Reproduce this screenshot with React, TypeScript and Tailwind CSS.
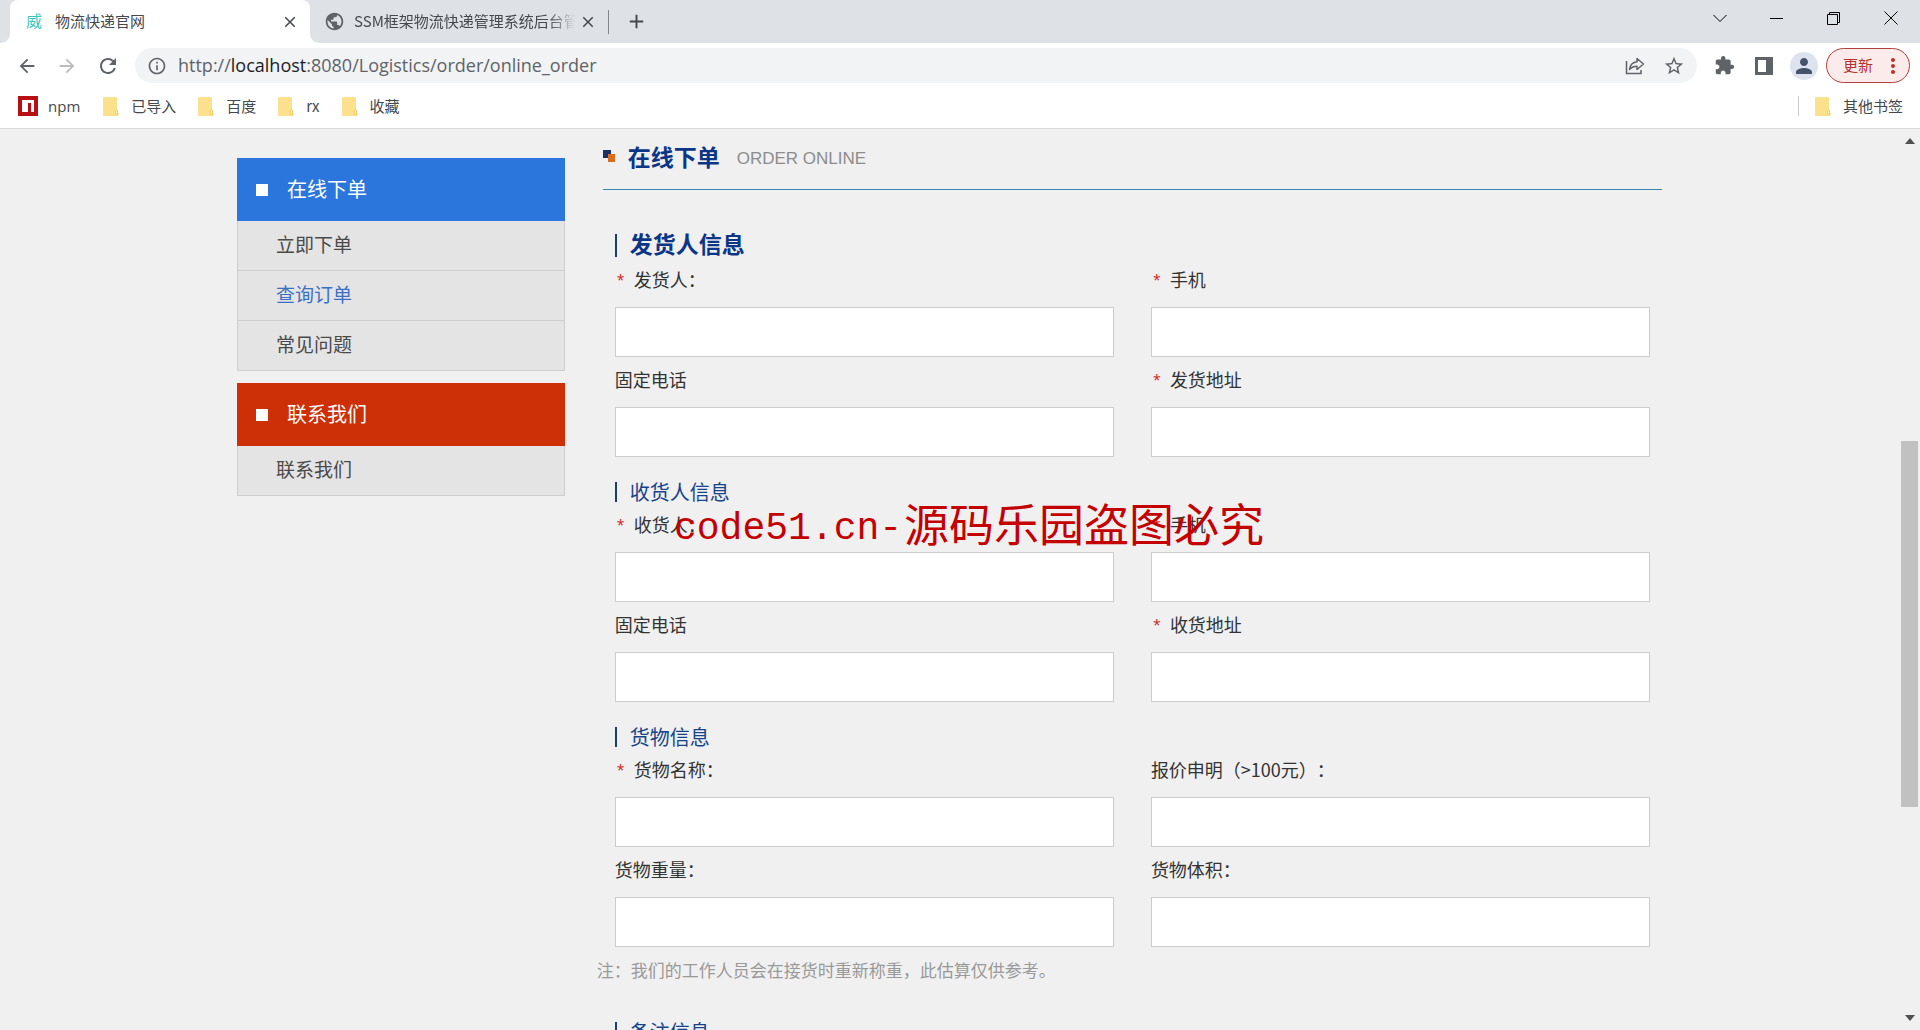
import { useState } from "react";
import {
  MdAdd,
  MdArrowBack,
  MdArrowForward,
  MdClose,
  MdExtension,
  MdInfoOutline,
  MdMoreVert,
  MdPerson,
  MdPublic,
  MdRefresh,
  MdStarBorder,
} from "react-icons/md";

type FieldDef = { id: string; label: string; required?: boolean };

const senderFields: FieldDef[] = [
  { id: "senderName", label: "发货人：", required: true },
  { id: "senderMobile", label: "手机", required: true },
  { id: "senderPhone", label: "固定电话" },
  { id: "senderAddress", label: "发货地址", required: true },
];

const receiverFields: FieldDef[] = [
  { id: "receiverName", label: "收货人：", required: true },
  { id: "receiverMobile", label: "手机", required: true },
  { id: "receiverPhone", label: "固定电话" },
  { id: "receiverAddress", label: "收货地址", required: true },
];

const goodsFields: FieldDef[] = [
  { id: "goodsName", label: "货物名称：", required: true },
  { id: "goodsValue", label: "报价申明（>100元）：" },
  { id: "goodsWeight", label: "货物重量：" },
  { id: "goodsVolume", label: "货物体积：" },
];

const FolderIcon = () => (
  <svg width="16" height="19" viewBox="0 0 16 19" aria-hidden="true">
    <path d="M1 0h12a1 1 0 0 1 1 1v11l2 5-1 2H1a1 1 0 0 1-1-1V1a1 1 0 0 1 1-1z" fill="#fbe18b" />
    <path d="M13.500 12.500c-1.500 1.500-1.500 4 0 6 1.500-2 1.500-4.500 0-6z" fill="#fff0b8" stroke="#e9c65a" strokeWidth="0.800" />
  </svg>
);

const NpmIcon = () => (
  <svg width="20" height="20" viewBox="0 0 20 20" aria-hidden="true">
    <path d="M0 0h20v20H0z" fill="#b80f14" />
    <path d="M4 4h12v12h-3V7h-3v9H4z" fill="#fff" />
  </svg>
);

const ShareIcon = () => (
  <svg width="20" height="20" viewBox="0 0 20 20" fill="none" stroke="#5f6368" strokeWidth="1.500" aria-hidden="true">
    <path d="M1.500 5v12.500H16V14" />
    <path d="M12 2.500 18.500 8 12 13.500v-3.200c-3.500 0-5.500 1-7.500 3.200.6-4.500 3-7.300 7.500-7.800z" strokeLinejoin="round" />
  </svg>
);

const TabBar = () => (
  <div className="flex h-[43px] shrink-0 items-stretch bg-[#dee1e6] text-[15px] text-[#45494d]">
    <svg className="self-end" width="10" height="10" viewBox="0 0 10 10" aria-hidden="true">
      <path d="M10 0v10H0C6 10 10 6 10 0z" fill="#fff" />
    </svg>
    <div className="flex w-[300px] items-center rounded-t-lg bg-white pr-[11px] pl-4">
      <span className="w-[29px] pb-1 text-[16px] text-[#3cc7b9]">威</span>
      <span className="flex-1">物流快递官网</span>
      <button type="button" aria-label="关闭标签页">
        <MdClose size={18} />
      </button>
    </div>
    <svg className="self-end" width="10" height="10" viewBox="0 0 10 10" aria-hidden="true">
      <path d="M0 0v10h10C4 10 0 6 0 0z" fill="#fff" />
    </svg>
    <div className="flex w-[288px] items-center pr-[11px] pl-1">
      <MdPublic size={21} className="mr-[9px] shrink-0 text-[#5f6368]" />
      <span className="flex-1 overflow-hidden whitespace-nowrap [mask-image:linear-gradient(to_right,black_88%,transparent)]">
        SSM框架物流快递管理系统后台管
      </span>
      <button type="button" aria-label="关闭标签页" className="pl-1">
        <MdClose size={18} />
      </button>
    </div>
    <span className="h-6 w-px self-center bg-[#84878b]" />
    <button type="button" aria-label="新建标签页" className="px-4">
      <MdAdd size={23} />
    </button>
    <div className="ml-auto flex items-start text-black">
      <button type="button" aria-label="搜索标签页" className="flex h-9 w-[57px] items-center justify-center">
        <svg width="14" height="14" viewBox="0 0 14 14" fill="none" stroke="currentColor">
          <path d="M.5 4 7 10.500 13.500 4" />
        </svg>
      </button>
      <button type="button" aria-label="最小化" className="flex h-9 w-[57px] items-center justify-center">
        <svg width="13" height="13" viewBox="0 0 13 13">
          <path d="M0 6h13v1H0z" />
        </svg>
      </button>
      <button type="button" aria-label="还原" className="flex h-9 w-[57px] items-center justify-center">
        <svg width="13" height="13" viewBox="0 0 13 13" fill="none" stroke="currentColor">
          <path d="M.5 2.500h10v10H.5zM2.500 2.500v-2h10v10h-2" />
        </svg>
      </button>
      <button type="button" aria-label="关闭" className="flex h-9 w-[58px] items-center justify-center">
        <svg width="14" height="14" viewBox="0 0 14 14" fill="none" stroke="currentColor">
          <path d="m.5.500 13 13m0-13-13 13" />
        </svg>
      </button>
    </div>
  </div>
);

const Toolbar = () => {
  const [path, setPath] = useState(":8080/Logistics/order/online_order");

  return (
    <div className="flex h-[45px] shrink-0 items-center bg-white pr-[10px] text-[#5f6368]">
      <div className="flex w-[135px] shrink-0 items-center gap-[18px] pl-4">
        <button type="button" aria-label="后退"><MdArrowBack size={22} /></button>
        <button type="button" aria-label="前进" className="text-[#babcbe]"><MdArrowForward size={22} /></button>
        <button type="button" aria-label="刷新"><MdRefresh size={24} /></button>
      </div>
      <div className="flex h-[35px] flex-1 items-center rounded-full bg-[#f1f3f4] pr-3 pl-3 font-['Open_Sans','Noto_Sans',sans-serif] text-[18px]">
        <MdInfoOutline size={20} className="mr-[11px] shrink-0" />
        <span>http://</span>
        <span className="text-[#202124]">localhost</span>
        <input
          type="text"
          aria-label="地址"
          value={path}
          onChange={(e) => setPath(e.target.value)}
          className="min-w-0 flex-1 bg-transparent focus:outline-none"
        />
        <button type="button" aria-label="分享" className="mr-[18px]"><ShareIcon /></button>
        <button type="button" aria-label="收藏此页"><MdStarBorder size={22} /></button>
      </div>
      <div className="flex items-center pl-[17px]">
        <button type="button" aria-label="扩展程序" className="mr-5"><MdExtension size={21} /></button>
        <button type="button" aria-label="侧边栏" className="mr-[17px]">
          <svg width="18" height="18" viewBox="0 0 18 18" aria-hidden="true">
            <path fillRule="evenodd" d="M0 0h18v18H0zM3 3v12h8V3z" fill="#5f6368" />
          </svg>
        </button>
        <button type="button" aria-label="用户" className="mr-2 flex size-7 items-center justify-center rounded-full bg-[#dce3ee] text-[#44536a]">
          <MdPerson size={24} />
        </button>
        <button type="button" className="flex h-[35px] w-[84px] items-center justify-between rounded-full border border-[#b3403a] bg-[#fbeceb] pr-1 pl-4 text-[15px] text-[#b8312b]">
          更新
          <MdMoreVert size={24} />
        </button>
      </div>
    </div>
  );
};

const bookmarks = ["已导入", "百度", "rx", "收藏"];

const BookmarkBar = () => (
  <div className="flex h-[41px] shrink-0 items-center border-b border-[#dadada] bg-white pr-[17px] pb-1 pl-[18px] text-[15px] text-[#45494d]">
    <a href="#npm" className="mr-[23px] flex items-center gap-[10px] font-['Open_Sans','Noto_Sans',sans-serif]">
      <NpmIcon />
      npm
    </a>
    <div className="flex gap-[22px]">
      {bookmarks.map((name) => (
        <a key={name} href="#bookmark" className="flex items-center gap-3">
          <FolderIcon />
          {name}
        </a>
      ))}
    </div>
    <a href="#other" className="ml-auto flex items-center gap-3">
      <span className="mr-1 h-5 w-px bg-[#c8cacd]" />
      <FolderIcon />
      其他书签
    </a>
  </div>
);

const menuTitle = "flex h-[63px] items-center gap-[19px] pl-[19px] text-[20px] text-white";
const menuItem = "flex h-[50px] items-center border border-t-0 border-[#cecece] bg-[#e4e4e4] pb-[2px] pl-[38px] text-[19px]";

const Sidebar = () => (
  <aside className="w-[23%] shrink-0 pt-[29px]">
    <h2 className={`${menuTitle} bg-[#2b76dd]`}>
      <span className="size-3 bg-white" />
      <span className="pb-[2px]">在线下单</span>
    </h2>
    <nav className="mb-3">
      <a href="#order" className={`${menuItem} text-[#4a4a4a]`}>立即下单</a>
      <a href="#query" className={`${menuItem} text-[#3a6fc4]`}>查询订单</a>
      <a href="#faq" className={`${menuItem} text-[#4a4a4a]`}>常见问题</a>
    </nav>
    <h2 className={`${menuTitle} bg-[#cd2f06]`}>
      <span className="size-3 bg-white" />
      <span className="pb-[2px]">联系我们</span>
    </h2>
    <nav>
      <a href="#contact" className={`${menuItem} text-[#4a4a4a]`}>联系我们</a>
    </nav>
  </aside>
);

const Fields = ({ fields }: { fields: FieldDef[] }) => {
  const [values, setValues] = useState<Record<string, string>>({});

  return (
    <div className="grid grid-cols-2 gap-x-[37px]">
      {fields.map((field) => (
        <div key={field.id}>
          <label htmlFor={field.id} className="flex h-[50px] items-center pb-[5px] text-[18px] text-[#333]">
            {field.required && (
              <span className="w-[19px] pl-[2px] font-['Open_Sans','Noto_Sans',sans-serif] text-[14px] text-[#d01818]">*</span>
            )}
            {field.label}
          </label>
          <input
            id={field.id}
            type="text"
            value={values[field.id] || ""}
            onChange={(e) => setValues({ ...values, [field.id]: e.target.value })}
            className="block h-[50px] w-full border border-[#ccc] bg-white px-3 text-[18px] focus:outline-none"
          />
        </div>
      ))}
    </div>
  );
};

const SectionTitle = ({ children }: { children: string }) => (
  <h3 className="mt-[25px] border-l-2 border-[#17406f] pl-[13px] text-[20px] leading-[20px] text-[#17438a]">
    {children}
  </h3>
);

const OrderForm = () => (
  <main className="min-w-0 flex-1">
    <div className="border-b border-[#3a87ad] pb-[6px]">
      <div className="flex h-[54px] items-center">
        <svg width="12" height="12" viewBox="0 0 12 12" className="mr-[13px]" aria-hidden="true">
          <path d="M0 0h8v8H0z" fill="#1c2f66" />
          <path d="M5 4h7v8H5z" fill="#d96c1e" />
        </svg>
        <h1 className="mr-[17px] text-[23px] font-bold text-[#0b3587]">在线下单</h1>
        <span className="pt-[5px] font-['Liberation_Sans',sans-serif] text-[17px] text-[#8c8c8c]">ORDER ONLINE</span>
      </div>
    </div>
    <form className="mt-11 px-3">
      <h2 className="border-l-2 border-[#17406f] pb-[4px] pl-[13px] text-[23px] leading-[19px] font-bold text-[#0b3587]">
        发货人信息
      </h2>
      <Fields fields={senderFields} />
      <SectionTitle>收货人信息</SectionTitle>
      <Fields fields={receiverFields} />
      <SectionTitle>货物信息</SectionTitle>
      <Fields fields={goodsFields} />
      <p className="-ml-[18px] flex h-[50px] items-center pb-1 text-[17px] text-[#999]">
        注：我们的工作人员会在接货时重新称重，此估算仅供参考。
      </p>
      <SectionTitle>备注信息</SectionTitle>
    </form>
  </main>
);

const ScrollBar = () => (
  <div className="flex w-[21px] shrink-0 flex-col items-center py-[9px]" aria-hidden="true">
    <svg width="10" height="6" viewBox="0 0 10 6"><path d="M5 0l5 6H0z" fill="#505050" /></svg>
    <div className="flex w-full flex-1 flex-col items-center py-1">
      <div className="flex-[293]" />
      <div className="w-[17px] flex-[366] bg-[#c1c1c1]" />
      <div className="flex-[204]" />
    </div>
    <svg width="10" height="6" viewBox="0 0 10 6"><path d="M0 0h10L5 6z" fill="#505050" /></svg>
  </div>
);

const App = () => {
  return (
    <div className="relative flex h-screen w-full flex-col overflow-hidden bg-[#f0f0f0] font-['Noto_Sans_CJK_SC',sans-serif] [text-spacing-trim:space-all]">
      <TabBar />
      <Toolbar />
      <BookmarkBar />
      <div className="flex min-h-0 flex-1">
        <div className="flex-1 overflow-hidden">
          <div className="mx-auto flex w-full max-w-[1425px] gap-[38px]">
            <Sidebar />
            <OrderForm />
          </div>
        </div>
        <ScrollBar />
      </div>

      {/* Watermark */}
      <div className="pointer-events-none absolute top-[491px] left-[674px] flex text-[45px] leading-[64px] whitespace-nowrap text-[#c40000]">
        <span className="pt-3 pr-[2px] font-['Liberation_Mono',monospace] text-[38px] leading-[52px]">code51.cn-</span>
        <span>源码乐园盗图必究</span>
      </div>
    </div>
  );
};

export default App;
